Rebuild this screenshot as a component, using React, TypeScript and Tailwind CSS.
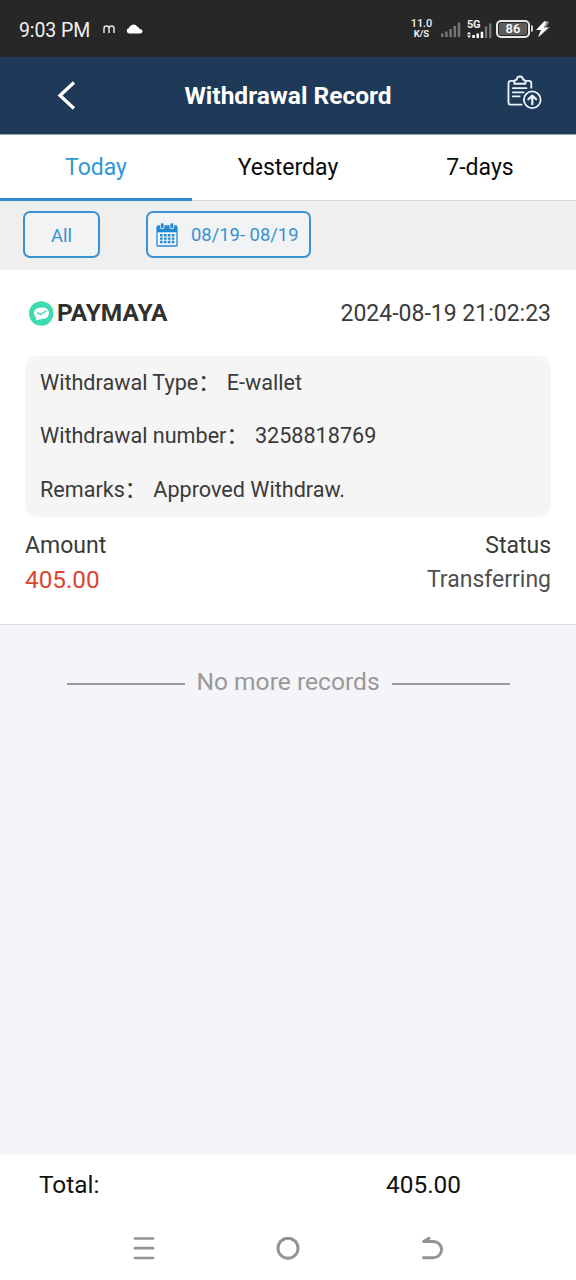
import React from "react";

function StatusBar() {
  return (
    <div className="flex h-[57px] items-center bg-[#272727] pt-[2px] pl-[19px] text-[#f1f1f1]">
      <span className="mt-[2px] w-[84px] text-[19.5px] leading-6 tracking-[-0.1px]">9:03 PM</span>
      <svg className="mt-[-2px] h-[8px] w-[12px]" viewBox="0 0 12 8" fill="none" stroke="#e4e4e4" strokeWidth="1.5">
        <path d="M1 8V3.5Q1 1 3.5 1T6 3.5V8M6 3.5Q6 1 8.5 1T11 3.5V8" />
      </svg>
      <svg className="ml-[11px] mt-[-2px] h-[10px] w-[17px]" viewBox="0 0 17 10" fill="#fff">
        <path d="M3.2 9.5A2.7 2.7 0 0 1 2.7 4.2 4.8 4.8 0 0 1 11.4 2.8Q13.2 3 13.5 5 16.5 5.2 16.5 7.6 16.3 9.5 14 9.5Z" />
      </svg>
      <div className="ml-[268px] mt-[-3px] flex w-[21px] flex-col items-center font-medium">
        <span className="text-[11px] leading-[11px] tracking-[-0.1px]">11.0</span>
        <span className="text-[9.5px] leading-[10px] font-bold">K/S</span>
      </div>
      <svg className="mt-[-2px] ml-[9px] h-[18px] w-[20px]" viewBox="0 0 20 18" fill="#747474">
        <path d="M0 13.5h2.5V17H0zM4.2 11.5h2.5V17H4.2zM8.4 9h2.5v8H8.4zM12.6 6h2.5v11h-2.5zM16.8 2.5h2.5V17h-2.5z" />
      </svg>
      <div className="ml-[6px] flex h-[20px] w-[26px] flex-col">
        <span className="h-[9px] text-[11px] leading-[10px] font-bold tracking-[-0.4px]">5G</span>
        <svg className="mt-[-8px] h-[18px] w-[26px] shrink-0" viewBox="0 0 26 18">
          <path d="M0 13.2 2 10.7l2 2.5zM0 14.6 2 17l2-2.4z" fill="#fff" />
          <path d="M5.3 14h2.5v3H5.3zM9.5 12.5H12V17H9.5zM13.7 10.8h2.5V17h-2.5z" fill="#fff" />
          <path d="M17.9 5.5h2.3V17h-2.3zM22.1 2.5h2.3V17h-2.3z" fill="#777" />
        </svg>
      </div>
      <div className="mt-[-2px] ml-[3px] flex h-[18px] w-[34px] items-center justify-center rounded-[5px] border-2 border-[#e8e8e8] p-[1px]">
        <span className="flex h-[12px] w-full items-center justify-center rounded-[2px] bg-[#5d5d5d] text-[13px] leading-3 font-medium text-white">86</span>
      </div>
      <span className="mt-[-2px] ml-[1px] h-[7px] w-[2px] rounded-r bg-[#d0d0d0]" />
      <svg className="mt-[-2px] ml-[2px] h-[18px] w-[16px]" viewBox="0 0 16 18">
        <path d="M11 1 3 10h4L4 17l11-10h-4l3-5z" fill="#999" />
        <path d="M9.5 1 1 10h5L3 17 13 8H8.5L11 2z" fill="#fff" />
      </svg>
    </div>
  );
}

function Header() {
  return (
    <header className="grid h-[78px] grid-cols-[1fr_auto_1fr] items-center border-b border-[#8fa3b8] bg-[#1f3958]">
      <svg className="mt-[-2px] ml-[57px] h-[30px] w-[20px]" viewBox="0 0 20 30" fill="none" stroke="#fff" strokeWidth="3.3">
        <path d="M17 2.5 3 15.5 17 28.5" />
      </svg>
      <h1 className="text-[24.5px] leading-7 font-bold whitespace-nowrap text-white">Withdrawal Record</h1>
      <svg className="mr-[34px] mt-[-6px] h-[35px] w-[36px] justify-self-end" viewBox="0 0 37 36" fill="none" stroke="#eaf3fb" strokeWidth="1.9" strokeLinecap="round" strokeLinejoin="round">
        <path d="M9 6H5Q2.5 6 2.5 8.5V28Q2.5 30.5 5 30.5H16M20 6H23.5Q26 6 26 8.5V13" />
        <path d="M8.5 9V6.8Q8.5 5 11 4.7 11.3 1.5 14.3 1.5T17.6 4.7Q20 5 20 6.8V9Z" />
        <path d="M7 13.5H21M7 17.8H18M7 22H14" />
        <circle cx="27" cy="25.5" r="8.6" />
        <path d="M27 30V21.5M23 25 27 21.2 31 25" strokeWidth="2.3" />
      </svg>
    </header>
  );
}

function Tabs() {
  return (
    <nav className="grid h-[66px] grid-cols-3 text-center text-[23px] leading-[66px] text-[#0c0c0c]">
      <div className="text-[#3197d7] shadow-[inset_0_-3px_0_#2b8ccd]">Today</div>
      <div className="shadow-[inset_0_-1px_0_#d6d6d6]">Yesterday</div>
      <div className="shadow-[inset_0_-1px_0_#d6d6d6]">7-days</div>
    </nav>
  );
}

function CalendarIcon() {
  return (
    <svg className="h-[24px] w-[22px]" viewBox="0 0 22 24">
      <path d="M2.5 3H19.5Q21 3 21 4.5V22.5Q21 23 20 23H2Q1 23 1 22V4.5Q1 3 2.5 3Z" fill="#f3f7fa" stroke="#2a89cf" strokeWidth="1.3" />
      <path d="M1 3H21V9.3H1Z" fill="#2389d2" />
      <path d="M4.5 0h3.5v5.5H4.5zM14 0h3.5v5.5H14z" fill="#2389d2" stroke="#efefef" strokeWidth=".8" />
      <path d="M4 12.2H19M4 15.6H19M4 19H19" stroke="#2a89cf" strokeWidth="2.4" strokeDasharray="2.7 1.2" />
    </svg>
  );
}

function Filters() {
  return (
    <div className="flex h-[69px] items-start bg-[#efefef] pt-[10px] pl-[23px] text-[#3a91d0]">
      <button className="h-[47px] w-[77px] rounded-[7px] border-2 border-[#3b92d2] bg-[#f1f3f5] pt-[5px] text-[18.5px]">All</button>
      <button className="ml-[46px] flex h-[47px] w-[165px] items-center rounded-[7px] border-2 border-[#3b92d2] bg-[#f1f3f5] pl-[8px] text-[18.4px]">
        <CalendarIcon />
        <span className="ml-[13px] whitespace-nowrap">08/19- 08/19</span>
      </button>
    </div>
  );
}

function Detail({ label, value }: { label: string; value: string }) {
  return (
    <div className="flex h-[54px] items-center">
      <span>{label}</span>
      <span className="w-[22px]">：</span>
      <span className="ml-[6.5px]">{value}</span>
    </div>
  );
}

function RecordCard() {
  return (
    <section className="h-[355px] border-b border-[#dcdcdc] bg-white px-[25px] pt-[28px] text-[#3a3a3a]">
      <div className="flex h-[30px] items-center">
        <svg className="ml-[4px] h-[25px] w-[25px]" viewBox="0 0 25 25">
          <circle cx="12.2" cy="12.5" r="12.2" fill="#3ddbb0" />
          <path d="M5 12Q5 6.8 12.4 6.4T20 12Q19.6 18.2 12 18.3L6.7 19.2 7.4 16.7Q5 15 5 12Z" fill="#fff" />
          <path d="M8.3 11.4 11.5 13.6 17.5 9.8" fill="none" stroke="#3ddbb0" strokeWidth="1.3" />
        </svg>
        <span className="ml-[3px] text-[24.5px] font-bold text-[#303030]">PAYMAYA</span>
        <time className="mt-[3px] ml-auto text-[23px]">2024-08-19 21:02:23</time>
      </div>
      <div className="mt-[28px] h-[161px] rounded-[13px] bg-[#f5f5f5] pt-[1px] pl-[15px] text-[21.6px]">
        <div className="flex flex-col [&>div:first-child]:h-[52px]">
          <Detail label="Withdrawal Type" value="E-wallet" />
          <Detail label="Withdrawal number" value="3258818769" />
          <Detail label="Remarks" value="Approved Withdraw." />
        </div>
      </div>
      <div className="mt-[12px] flex justify-between text-[23px] leading-[34px]">
        <div>
          <p>Amount</p>
          <p className="text-[24.3px] text-[#da4531]">405.00</p>
        </div>
        <div className="text-right">
          <p>Status</p>
          <p className="text-[#505050]">Transferring</p>
        </div>
      </div>
    </section>
  );
}

export default function App() {
  return (
    <div className="flex h-[1280px] w-[576px] flex-col overflow-hidden bg-white font-[Roboto,'Noto_Sans_CJK_SC',sans-serif]">
      <StatusBar />
      <Header />
      <Tabs />
      <Filters />
      <main className="flex-1 bg-[#f4f4f9]">
        <RecordCard />
        <div className="mt-[40px] flex h-[34px] items-center justify-center text-[24.6px] text-[#999999]">
          <span className="mt-[4px] h-[2px] w-[118px] bg-[#9c9c9f]" />
          <span className="w-[207px] text-center">No more records</span>
          <span className="mt-[4px] h-[2px] w-[118px] bg-[#9c9c9f]" />
        </div>
      </main>
      <footer className="flex h-[61px] items-center justify-between bg-white pr-[115px] pl-[39px] text-[24.4px] text-[#111]">
        <span>Total:</span>
        <span>405.00</span>
      </footer>
      <div className="flex h-[64px] justify-center gap-[120px] pt-[20px]">
        <svg className="h-[24px] w-[24px]" viewBox="0 0 24 24" fill="none" stroke="#929292" strokeWidth="2.7" strokeLinecap="round">
          <path d="M3 2.5H21M3 12.2H21M3 22H21" />
        </svg>
        <svg className="h-[24px] w-[24px]" viewBox="0 0 24 24" fill="none" stroke="#929292" strokeWidth="2.9">
          <circle cx="12" cy="12.2" r="10" />
        </svg>
        <svg className="h-[24px] w-[24px]" viewBox="0 0 24 24" fill="none" stroke="#929292" strokeWidth="2.9" strokeLinecap="round" strokeLinejoin="round">
          <path d="M3.5 21.7H13.5A8.1 8.1 0 0 0 13.5 5.5H3.5L9 2.3" />
          <path d="M3.5 5.5 9 2.3V5.5Z" fill="#929292" stroke="none" />
        </svg>
      </div>
    </div>
  );
}
